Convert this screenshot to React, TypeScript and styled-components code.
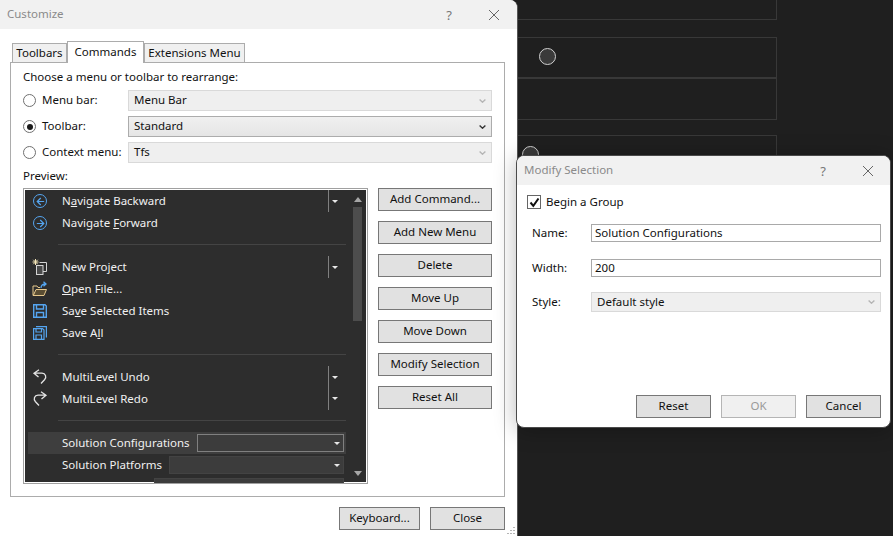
import { ReactNode } from "react";
import { ArrowLeft, ArrowRight } from "lucide-react";
import styled, { createGlobalStyle } from "styled-components";

const GlobalStyle = createGlobalStyle`
	html, body {
		margin: 0;
		padding: 0;
		height: 100%;
		overflow: hidden;
		background: #1f1f1f;
	}
	* {
		box-sizing: border-box;
	}
	body {
		font-family: "Noto Sans", "Liberation Sans", sans-serif;
		font-size: 11.5px;
		color: #111;
	}
`;

interface RowItem {
	icon?: ReactNode;
	label?: ReactNode;
	split?: "single" | "top" | "bottom";
	selected?: boolean;
	comboWidth?: number;
	separator?: boolean;
}

function NavIcon({ back }: { back?: boolean }) {
	const Arrow = back ? ArrowLeft : ArrowRight;
	return (
		<NavCircle>
			<Arrow size={11} strokeWidth={2.6} color="#55a5f0" />
		</NavCircle>
	);
}

function NewProjectIcon() {
	return (
		<svg width="16" height="16" viewBox="0 0 16 16" fill="none">
			<path d="M3.5 0v6M.5 3h6M1.3 .8l4.4 4.4M5.7 .8L1.3 5.2" stroke="#f5e6b8" strokeWidth="1" />
			<path d="M7.5 3.5h7v9h-4" stroke="#d4d4d4" strokeWidth="1" />
			<rect x="4.5" y="6.5" width="6.5" height="9" stroke="#d4d4d4" strokeWidth="1" fill="#4a4a4a" />
		</svg>
	);
}

function OpenIcon() {
	return (
		<svg width="16" height="16" viewBox="0 0 16 16" fill="none">
			<path d="M1 6V14.5H12L14.5 8.5H4L1.5 14" stroke="#e6c88c" strokeWidth="1" fill="#5a4d33" />
			<path d="M1 6V5H5L6 6.5H8" stroke="#e6c88c" strokeWidth="1" />
			<path d="M9 7C9 4 10.5 3 13.5 3M11.5 .8L14 3L11.5 5.2" stroke="#55a5f0" strokeWidth="1.3" />
		</svg>
	);
}

function SaveIcon() {
	return (
		<svg width="16" height="16" viewBox="0 0 16 16" fill="none" stroke="#55a5f0" strokeWidth="1.4">
			<path d="M1.7 1.7H13L14.3 3V14.3H1.7Z" />
			<path d="M4.5 1.7V6H11.5V1.7M4.5 14.3V9.5H11.5V14.3" />
		</svg>
	);
}

function SaveAllIcon() {
	return (
		<svg width="16" height="16" viewBox="0 0 16 16" fill="none" stroke="#55a5f0" strokeWidth="1.2">
			<path d="M1.6 3.6H10.5L12 5V14.4H1.6Z" />
			<path d="M4 3.6V7H9.5V3.6M4 14.4V10H9.5V14.4" />
			<path d="M4 1.6H14.4V12.5" />
		</svg>
	);
}

function UndoIcon() {
	return (
		<svg width="16" height="16" viewBox="0 0 16 16" fill="none" stroke="#e4e4e4" strokeWidth="1.3">
			<path d="M7 .8L2 4.2L6.5 8M2 4.2H10C13.5 4.2 15 8 12.5 10.8L9 14.5" />
		</svg>
	);
}

function RedoIcon() {
	return (
		<svg width="16" height="16" viewBox="0 0 16 16" fill="none" stroke="#e4e4e4" strokeWidth="1.3">
			<path d="M9 .8L14 4.2L9.5 8M14 4.2H6C2.5 4.2 1 8 3.5 10.8L7 14.5" />
		</svg>
	);
}

function CloseGlyph() {
	return (
		<svg width="12" height="12" viewBox="0 0 12 12" stroke="#666" strokeWidth="1">
			<path d="M1 1L11 11M11 1L1 11" />
		</svg>
	);
}

function Chevron({ color }: { color: string }) {
	return (
		<svg width="7" height="4" viewBox="0 0 7 4" fill="none" stroke={color} strokeWidth="1.4">
			<path d="M.6 .5L3.5 3.2L6.4 .5" />
		</svg>
	);
}

const rows: RowItem[] = [
	{
		icon: <NavIcon back />,
		label: (
			<>
				N<u>a</u>vigate Backward
			</>
		),
		split: "single",
	},
	{
		icon: <NavIcon />,
		label: (
			<>
				Navigate <u>F</u>orward
			</>
		),
	},
	{ separator: true },
	{ icon: <NewProjectIcon />, label: "New Project", split: "single" },
	{
		icon: <OpenIcon />,
		label: (
			<>
				<u>O</u>pen File...
			</>
		),
	},
	{
		icon: <SaveIcon />,
		label: (
			<>
				Sa<u>v</u>e Selected Items
			</>
		),
	},
	{
		icon: <SaveAllIcon />,
		label: (
			<>
				Save A<u>l</u>l
			</>
		),
	},
	{ separator: true },
	{ icon: <UndoIcon />, label: "MultiLevel Undo", split: "top" },
	{ icon: <RedoIcon />, label: "MultiLevel Redo", split: "bottom" },
	{ separator: true },
	{ label: "Solution Configurations", selected: true, comboWidth: 147 },
	{ label: "Solution Platforms", comboWidth: 175 },
	{ comboWidth: 190 },
];

const sideButtons = [
	"Add Command...",
	"Add New Menu",
	"Delete",
	"Move Up",
	"Move Down",
	"Modify Selection",
	"Reset All",
];

const combos = [
	{ label: "Menu bar:", value: "Menu Bar", checked: false },
	{ label: "Toolbar:", value: "Standard", checked: true },
	{ label: "Context menu:", value: "Tfs", checked: false },
];

function App() {
	return (
		<>
			<GlobalStyle />
			<Desktop>
				<BackRows>
					<BackRow height={40} />
					<BackRow height={41} marginTop={17}>
						<BackRadio offset={21} />
					</BackRow>
					<BackRow height={42} marginTop={0} />
					<BackRow height={60} marginTop={15}>
						<BackRadio offset={4} />
					</BackRow>
				</BackRows>

				<CustomizeWindow>
					<TitleBar>
						<TitleText>Customize</TitleText>
						<HelpMark>?</HelpMark>
						<CloseButton>
							<CloseGlyph />
						</CloseButton>
					</TitleBar>
					<Tabs>
						<Tab width={55}>Toolbars</Tab>
						<Tab width={77} active>
							Commands
						</Tab>
						<Tab width={101}>Extensions Menu</Tab>
					</Tabs>
					<Panel>
						<PanelText>Choose a menu or toolbar to rearrange:</PanelText>
						<ComboList>
							{combos.map((item) => (
								<ComboRow key={item.label}>
									<RadioLabel>
										<Radio checked={item.checked} />
										<RadioText>{item.label}</RadioText>
									</RadioLabel>
									<Combo disabled={!item.checked}>
										<ComboValue>{item.value}</ComboValue>
										<Chevron color={item.checked ? "#333" : "#b5b5b5"} />
									</Combo>
								</ComboRow>
							))}
						</ComboList>
						<PreviewText>Preview:</PreviewText>
						<PreviewArea>
							<PreviewFrame>
								<RowColumn>
									{rows.map((row, idx) =>
										row.separator ? (
											<SeparatorRow key={idx} />
										) : (
											<MenuRow key={idx} selected={row.selected}>
												<IconCell>{row.icon}</IconCell>
												<RowLabel>{row.label}</RowLabel>
												{row.split && (
													<SplitArrow part={row.split}>
														<TinyArrow />
													</SplitArrow>
												)}
												{row.comboWidth && (
													<RowCombo selected={row.selected} style={{ width: row.comboWidth }}>
														<TinyArrow />
													</RowCombo>
												)}
											</MenuRow>
										),
									)}
								</RowColumn>
								<ScrollBar>
									<ScrollUp />
									<ScrollThumb />
									<ScrollDown />
								</ScrollBar>
							</PreviewFrame>
							<SideButtons>
								{sideButtons.map((text) => (
									<DialogButton key={text} width={114}>
										{text}
									</DialogButton>
								))}
							</SideButtons>
						</PreviewArea>
					</Panel>
					<Footer>
						<DialogButton width={81}>Keyboard...</DialogButton>
						<DialogButton width={75}>Close</DialogButton>
					</Footer>
					<Grip>
						<svg width="10" height="10" viewBox="0 0 10 10" fill="#b5b5b5">
							<path d="M7 1h2v1H7zM4 4h2v1H4zM7 4h2v1H7zM1 7h2v1H1zM4 7h2v1H4zM7 7h2v1H7z" />
						</svg>
					</Grip>
				</CustomizeWindow>

				<ModifyWindow>
					<ModifyTitleBar>
						<TitleText>Modify Selection</TitleText>
						<ModifyHelp>?</ModifyHelp>
						<ModifyClose>
							<CloseGlyph />
						</ModifyClose>
					</ModifyTitleBar>
					<ModifyBody>
						<CheckRow>
							<CheckBox>
								<svg width="11" height="11" viewBox="0 0 11 11" fill="none" stroke="#111" strokeWidth="2">
									<path d="M1.5 5.5L4.3 8.8L9.5 1.5" />
								</svg>
							</CheckBox>
							<RadioText>Begin a Group</RadioText>
						</CheckRow>
						<FieldRow height={17} marginTop={15}>
							<FieldLabel>Name:</FieldLabel>
							<TextField>Solution Configurations</TextField>
						</FieldRow>
						<FieldRow height={17} marginTop={18}>
							<FieldLabel>Width:</FieldLabel>
							<TextField>200</TextField>
						</FieldRow>
						<FieldRow height={20} marginTop={16}>
							<FieldLabel>Style:</FieldLabel>
							<StyleCombo>
								<StyleValue>Default style</StyleValue>
								<Chevron color="#b5b5b5" />
							</StyleCombo>
						</FieldRow>
						<ModifyFooter>
							<DialogButton width={75}>Reset</DialogButton>
							<DialogButton width={75} disabled>
								OK
							</DialogButton>
							<DialogButton width={75}>Cancel</DialogButton>
						</ModifyFooter>
					</ModifyBody>
				</ModifyWindow>
			</Desktop>
		</>
	);
}

export default App;

const Desktop = styled.div`
	position: relative;
	width: 893px;
	height: 536px;
	overflow: hidden;
	background: #1f1f1f;
`;

const BackRows = styled.div`
	display: flex;
	flex-direction: column;
	width: 377px;
	margin-left: 400px;
	margin-top: -20px;
`;

const BackRow = styled.div<{ height: number; marginTop?: number }>`
	position: relative;
	height: ${({ height }) => height}px;
	margin-top: ${({ marginTop }) => marginTop ?? 0}px;
	border: 1px solid #383838;
`;

const BackRadio = styled.span<{ offset: number }>`
	position: absolute;
	top: 10px;
	left: ${({ offset }) => 117 + offset}px;
	width: 17px;
	height: 17px;
	border: 1.5px solid #d0d0d0;
	border-radius: 50%;
	background: #3a3a3a;
`;

const CustomizeWindow = styled.div`
	position: absolute;
	top: 0;
	left: 0;
	display: flex;
	flex-direction: column;
	width: 518px;
	height: 540px;
	background: #fff;
	border-right: 1px solid #555;
	border-radius: 0 8px 0 0;
	overflow: hidden;
`;

const TitleBar = styled.div`
	display: flex;
	align-items: center;
	height: 29px;
	padding-left: 7px;
	background: #f1f1f1;
`;

const TitleText = styled.span`
	padding-bottom: 2px;
	color: #8a8a8a;
`;

const HelpMark = styled.span`
	margin-left: auto;
	color: #777;
	font-size: 13px;
`;

const CloseButton = styled.span`
	display: flex;
	margin-left: 36px;
	margin-right: 17px;
`;

const Tabs = styled.div`
	position: relative;
	z-index: 1;
	display: flex;
	align-items: flex-end;
	height: 22px;
	margin: 12px 0 -1px 12px;
`;

const Tab = styled.div<{ width: number; active?: boolean }>`
	display: flex;
	justify-content: center;
	align-items: center;
	width: ${({ width }) => width}px;
	height: ${({ active }) => (active ? 22 : 20)}px;
	padding-bottom: ${({ active }) => (active ? 3 : 2)}px;
	background: ${({ active }) => (active ? "#fff" : "#f0f0f0")};
	border: 1px solid #acacac;
	border-bottom: ${({ active }) => (active ? "none" : "1px solid #acacac")};
`;

const Panel = styled.div`
	width: 495px;
	height: 435px;
	margin-left: 10px;
	padding: 6px 12px 0;
	border: 1px solid #acacac;
`;

const PanelText = styled.div`
	height: 16px;
	line-height: 16px;
`;

const ComboList = styled.div`
	display: flex;
	flex-direction: column;
	gap: 5px;
	margin-top: 5px;
`;

const ComboRow = styled.div`
	display: flex;
	align-items: center;
	height: 21px;
`;

const RadioLabel = styled.div`
	display: flex;
	align-items: center;
	gap: 6px;
	width: 105px;
	white-space: nowrap;
`;

const RadioText = styled.span`
	padding-bottom: 2px;
`;

const Radio = styled.span<{ checked?: boolean }>`
	display: flex;
	justify-content: center;
	align-items: center;
	width: 13px;
	height: 13px;
	border: 1px solid #707070;
	border-radius: 50%;
	background: #fff;
	flex-shrink: 0;

	&::after {
		content: "";
		display: ${({ checked }) => (checked ? "block" : "none")};
		width: 6px;
		height: 6px;
		border-radius: 50%;
		background: #1a1a1a;
	}
`;

const Combo = styled.div<{ disabled?: boolean }>`
	display: flex;
	justify-content: space-between;
	align-items: center;
	flex: 1;
	height: 21px;
	padding: 0 5px 0 5px;
	border: 1px solid ${({ disabled }) => (disabled ? "#d9d9d9" : "#acacac")};
	background: ${({ disabled }) => (disabled ? "#efefef" : "linear-gradient(#f0f0f0, #e5e5e5)")};
`;

const ComboValue = styled.span`
	padding-bottom: 2px;
`;

const PreviewText = styled.div`
	height: 16px;
	margin-top: 5px;
	line-height: 16px;
`;

const PreviewArea = styled.div`
	display: flex;
	gap: 10px;
	margin-top: 4px;
`;

const PreviewFrame = styled.div`
	display: flex;
	width: 345px;
	height: 296px;
	overflow: hidden;
	background: #2d2d2d;
	border: 1px solid #a0a0a0;
	box-shadow: inset 0 0 0 1px #fff;
	padding: 1px 2px 2px 4px;
`;

const RowColumn = styled.div`
	display: flex;
	flex-direction: column;
	width: 318px;
	flex-shrink: 0;
`;

const MenuRow = styled.div<{ selected?: boolean }>`
	position: relative;
	display: flex;
	align-items: center;
	flex: 0 0 22px;
	height: 22px;
	padding-right: 2px;
	color: #f1f1f1;
	background: ${({ selected }) => (selected ? "#3e3e3e" : "transparent")};
`;

const SeparatorRow = styled.div`
	flex: 0 0 22px;
	height: 22px;
	margin-left: 30px;
	background: linear-gradient(#444, #444) 0 10px / 100% 1px no-repeat;
`;

const IconCell = styled.div`
	display: flex;
	justify-content: center;
	align-items: center;
	width: 24px;
	margin-right: 10px;
`;

const NavCircle = styled.span`
	display: flex;
	justify-content: center;
	align-items: center;
	width: 14px;
	height: 14px;
	border: 1.5px solid #55a5f0;
	border-radius: 50%;
`;

const RowLabel = styled.span`
	padding-bottom: 1px;
	white-space: nowrap;
`;

const SplitArrow = styled.div<{ part: string }>`
	position: absolute;
	top: ${({ part }) => (part === "bottom" ? "-1px" : "0")};
	right: 0;
	display: flex;
	align-items: center;
	width: 18px;
	height: ${({ part }) => (part === "single" ? "22px" : "23px")};
	padding-left: 4px;
	background: linear-gradient(#808080, #808080) 0 0 / 1px 100% no-repeat;
`;

const TinyArrow = styled.span`
	width: 0;
	height: 0;
	border-left: 3px solid transparent;
	border-right: 3px solid transparent;
	border-top: 3px solid #e8e8e8;
`;

const RowCombo = styled.div<{ selected?: boolean }>`
	display: flex;
	justify-content: flex-end;
	align-items: center;
	height: 18px;
	margin-left: auto;
	padding-right: 3px;
	background: #3c3c3c;
	border: 1px solid ${({ selected }) => (selected ? "#808080" : "#434343")};
`;

const ScrollBar = styled.div`
	display: flex;
	flex-direction: column;
	align-items: center;
	width: 9px;
	margin-left: 7px;
`;

const ScrollUp = styled.span`
	margin-top: 7px;
	border-left: 4.5px solid transparent;
	border-right: 4.5px solid transparent;
	border-bottom: 5px solid #a6a6a6;
`;

const ScrollThumb = styled.span`
	width: 9px;
	height: 114px;
	margin-top: 5px;
	background: #4d4d4d;
`;

const ScrollDown = styled.span`
	margin-top: auto;
	margin-bottom: 5px;
	border-left: 4.5px solid transparent;
	border-right: 4.5px solid transparent;
	border-top: 5px solid #a6a6a6;
`;

const SideButtons = styled.div`
	display: flex;
	flex-direction: column;
	gap: 10px;
`;

const DialogButton = styled.button<{ width: number }>`
	width: ${({ width }) => width}px;
	height: 23px;
	padding: 0 0 2px;
	font: inherit;
	color: ${({ disabled }) => (disabled ? "#9a9a9a" : "#111")};
	background: ${({ disabled }) => (disabled ? "#f0f0f0" : "#e1e1e1")};
	border: 1px solid ${({ disabled }) => (disabled ? "#b5b5b5" : "#777")};
	border-radius: 0;
`;

const Footer = styled.div`
	display: flex;
	justify-content: flex-end;
	gap: 10px;
	width: 505px;
	margin-top: 10px;
`;

const Grip = styled.div`
	position: absolute;
	right: 1px;
	top: 526px;
	display: flex;
`;

const ModifyWindow = styled.div`
	position: absolute;
	top: 155px;
	left: 516px;
	display: flex;
	flex-direction: column;
	width: 375px;
	height: 273px;
	overflow: hidden;
	background: #fff;
	border: 1px solid #4a4a4a;
	border-radius: 8px;
	box-shadow: 0 2px 22px rgba(0, 0, 0, 0.28);
`;

const ModifyTitleBar = styled.div`
	display: flex;
	align-items: center;
	height: 29px;
	padding-left: 7px;
	background: #f1f1f1;
`;

const ModifyHelp = styled.span`
	margin-left: auto;
	color: #777;
	font-size: 13px;
`;

const ModifyClose = styled.span`
	display: flex;
	margin-left: 36px;
	margin-right: 16px;
`;

const ModifyBody = styled.div`
	display: flex;
	flex-direction: column;
	flex: 1;
	padding: 10px 9px 9px 15px;
`;

const CheckRow = styled.div`
	display: flex;
	align-items: center;
	gap: 5px;
	height: 14px;
	margin-left: -5px;
`;

const CheckBox = styled.span`
	display: flex;
	justify-content: center;
	align-items: center;
	width: 14px;
	height: 14px;
	border: 1px solid #666;
	background: #fff;
`;

const FieldRow = styled.div<{ height: number; marginTop: number }>`
	display: grid;
	grid-template-columns: 59px 290px;
	align-items: center;
	height: ${({ height }) => height}px;
	margin-top: ${({ marginTop }) => marginTop}px;
`;

const FieldLabel = styled.span`
	padding-bottom: 1px;
	white-space: nowrap;
`;

const TextField = styled.div`
	display: flex;
	align-items: center;
	height: 100%;
	padding: 0 0 1px 3px;
	border: 1px solid #a9a9a9;
	background: #fff;
`;

const StyleCombo = styled.div`
	display: flex;
	justify-content: space-between;
	align-items: center;
	height: 100%;
	padding: 0 5px;
	background: #efefef;
	border: 1px solid #d9d9d9;
`;

const StyleValue = styled.span`
	padding-bottom: 1px;
`;

const ModifyFooter = styled.div`
	display: flex;
	justify-content: flex-end;
	gap: 10px;
	margin-top: auto;
`;
